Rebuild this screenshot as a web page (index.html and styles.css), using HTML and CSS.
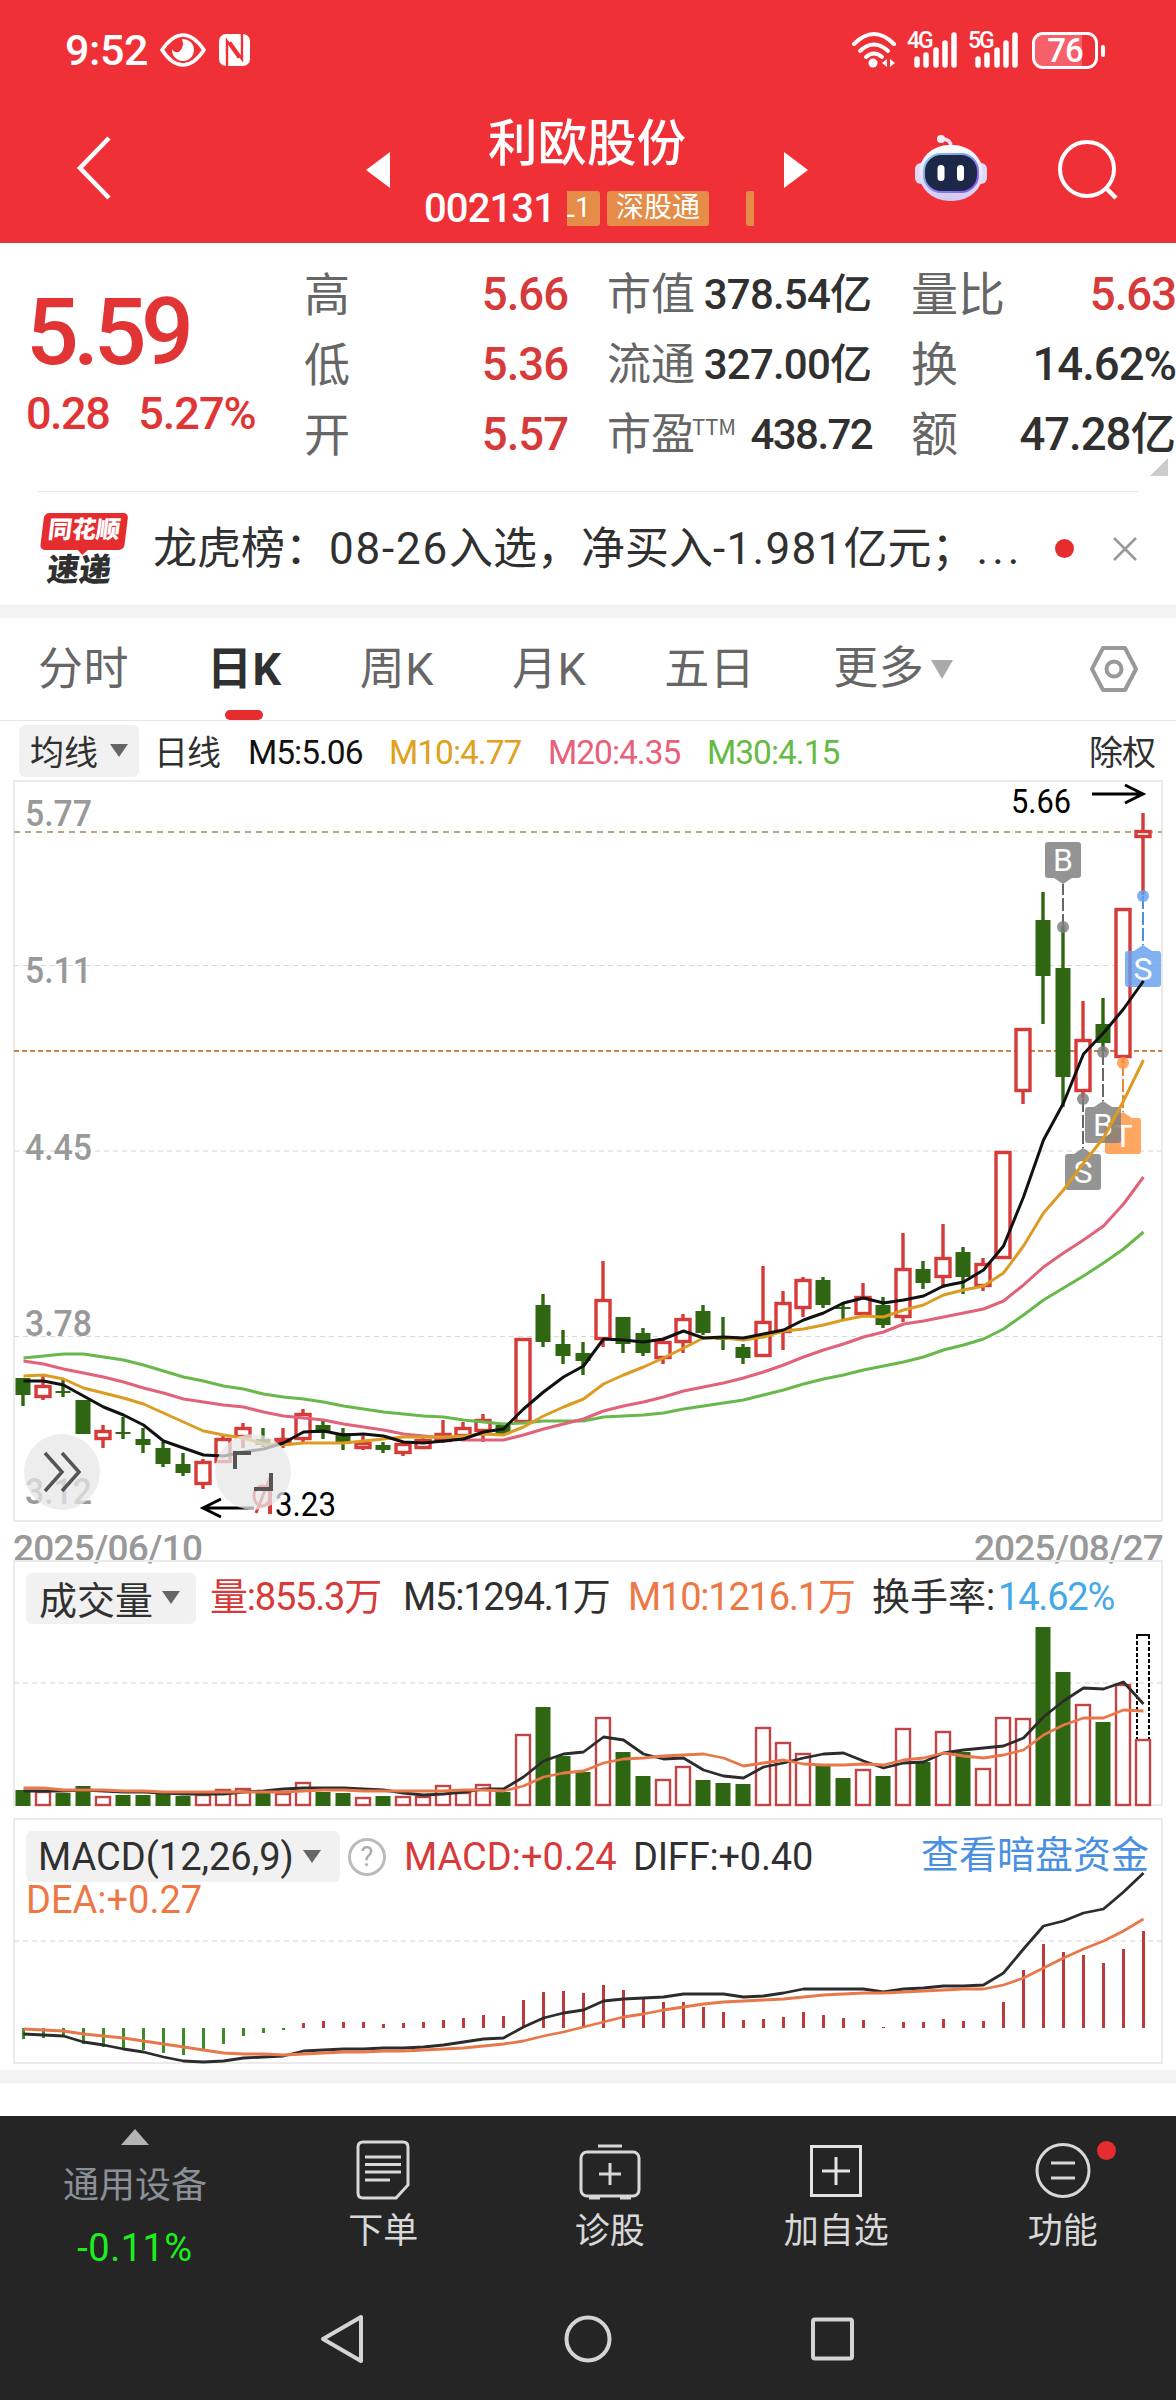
FILE: index.html
```html
<!DOCTYPE html>
<html lang="zh-CN">
<head>
    <meta charset="UTF-8">
    <meta name="viewport" content="width=device-width, initial-scale=1.0">
    <title>利欧股份 002131</title>
    <link rel="stylesheet" href="styles.css">
</head>
<body>
    <!-- Red top area -->
    <header class="top">
        <div class="status-bar">
            <div class="status-left">
                <span class="clock">9:52</span>
                <svg class="eye-icon" width="46" height="36" viewBox="0 0 46 36">
                    <path d="M2 18 Q12 3 23 3 Q34 3 44 18 Q34 33 23 33 Q12 33 2 18 Z" fill="none" stroke="#fff" stroke-width="3.6"/>
                    <path d="M22 7 A11 11 0 1 1 12 17 A6 6 0 0 0 19 20 Q25 15 22 7 Z" fill="#fff"/>
                </svg>
                <svg class="nfc-icon" width="32" height="34" viewBox="0 0 32 34">
                    <rect x="0" y="1" width="31" height="32" rx="7" fill="#fff"/>
                    <path d="M8 33 V8 L20 25 M23 1 V26 L11 9" fill="none" stroke="#f03037" stroke-width="2.4"/>
                </svg>
            </div>
            <div class="status-right">
                <svg width="46" height="38" viewBox="0 0 46 38">
                    <g fill="none" stroke="#fff" stroke-width="4" stroke-linecap="round">
                        <path d="M3 13 Q23 -7 43 13"/>
                        <path d="M9 20 Q23 7 37 20"/>
                        <path d="M15 26 Q23 19 31 26"/>
                    </g>
                    <circle cx="22" cy="32" r="4.5" fill="#fff"/>
                    <path d="M36 28 V36 L31 32 Z M39 28 V36 L44 32 Z" fill="#fff"/>
                </svg>
                <div class="signal">
                    <span>4G</span>
                    <svg width="50" height="36" viewBox="0 0 50 36"><path d="M9 27 V33 M18 23 V33 M28 18 V33 M37 11 V33 M46 3 V33" stroke="#fff" stroke-width="5.5" stroke-linecap="round"/></svg>
                </div>
                <div class="signal">
                    <span>5G</span>
                    <svg width="50" height="36" viewBox="0 0 50 36"><path d="M9 27 V33 M18 23 V33 M28 18 V33 M37 11 V33 M46 3 V33" stroke="#fff" stroke-width="5.5" stroke-linecap="round"/></svg>
                </div>
                <div class="battery"><span>76</span></div>
            </div>
        </div>
        <div class="title-bar">
            <svg class="back" width="40" height="68" viewBox="0 0 40 68"><path d="M35 4 L6 34 L35 64" fill="none" stroke="#fff" stroke-width="4.5"/></svg>
            <svg class="prev" width="26" height="38" viewBox="0 0 26 38"><path d="M25 1 V37 L1 19 Z" fill="#fff"/></svg>
            <div class="stock">
                <h1>利欧股份</h1>
                <div class="stock-code">
                    <span class="code">002131</span>
                    <div class="tags"><span class="tag cut">L1</span><span class="tag">深股通</span><span class="tag next"></span></div>
                </div>
            </div>
            <svg class="next-stock" width="26" height="38" viewBox="0 0 26 38"><path d="M1 1 V37 L25 19 Z" fill="#fff"/></svg>
            <svg class="robot" width="74" height="70" viewBox="0 0 74 70">
                <defs>
                    <linearGradient id="shell" x1="0" y1="0" x2="0" y2="1">
                        <stop offset="0" stop-color="#fff"/>
                        <stop offset="1" stop-color="#cfc9f2"/>
                    </linearGradient>
                    <linearGradient id="rim" x1="0" y1="0" x2="1" y2="1">
                        <stop offset="0" stop-color="#7fd0f0"/>
                        <stop offset="1" stop-color="#8a4fe8"/>
                    </linearGradient>
                </defs>
                <path d="M37 14 Q37 6 28 6" fill="none" stroke="#e8e2f8" stroke-width="3.5"/>
                <circle cx="27" cy="6" r="4" fill="#f4eefc"/>
                <rect x="1" y="30" width="12" height="21" rx="6" fill="#ddd9f8"/>
                <rect x="61" y="30" width="12" height="21" rx="6" fill="#ddd9f8"/>
                <rect x="5" y="12" width="64" height="56" rx="30" fill="url(#shell)"/>
                <rect x="10" y="21" width="54" height="38" rx="17" fill="#1d2748" stroke="url(#rim)" stroke-width="2"/>
                <rect x="23.500" y="32" width="7" height="16" rx="3.500" fill="#fff"/>
                <rect x="43" y="32" width="7" height="16" rx="3.500" fill="#fff"/>
            </svg>
            <svg class="search" width="62" height="62" viewBox="0 0 62 62">
                <circle cx="30" cy="30" r="27" fill="none" stroke="#fff" stroke-width="4"/>
                <path d="M48 48 L59 59" stroke="#fff" stroke-width="4.500"/>
            </svg>
        </div>
    </header>

    <!-- Quote summary -->
    <section class="quote">
        <div class="price-box">
            <div class="price">5.59</div>
            <div class="change"><span>0.28</span><span class="pct">5.27%</span></div>
        </div>
        <div class="col col-a">
            <div><label>高</label><b class="up">5.66</b></div>
            <div><label>低</label><b class="up">5.36</b></div>
            <div><label>开</label><b class="up">5.57</b></div>
        </div>
        <div class="col col-b">
            <div><label>市值</label><b>378.54<i>亿</i></b></div>
            <div><label>流通</label><b>327.00<i>亿</i></b></div>
            <div><label>市盈<sup>TTM</sup></label><b class="pe">438.72</b></div>
        </div>
        <div class="col col-c">
            <div><label>量比</label><b class="up">5.63</b></div>
            <div><label>换</label><b>14.62%</b></div>
            <div><label>额</label><b>47.28<i>亿</i></b></div>
        </div>
        <span class="corner"></span>
    </section>

    <!-- News line -->
    <section class="news">
        <div class="news-logo">
            <span class="bubble">同花顺</span>
            <span class="sub">速递</span>
        </div>
        <p><span>龙虎榜：</span><span class="n1">08-26</span><span>入选，净买入</span><span class="n2">-1.981</span><span>亿元；</span><span class="dots">...</span></p>
        <span class="red-dot"></span>
        <svg class="close" width="26" height="26" viewBox="0 0 26 26"><path d="M2 2 L24 24 M24 2 L2 24" stroke="#999" stroke-width="2.6"/></svg>
    </section>

    <!-- Period tabs -->
    <nav class="tabs">
        <a>分时</a>
        <a class="active">日K</a>
        <a>周K</a>
        <a>月K</a>
        <a>五日</a>
        <a class="more">更多<svg width="22" height="19" viewBox="0 0 22 19"><path d="M0 0 H22 L11 19 Z" fill="#aaa"/></svg></a>
        <svg class="setting" width="50" height="48" viewBox="0 0 50 48">
            <path d="M14 3 H36 L47 24 L36 45 H14 L3 24 Z" fill="none" stroke="#999" stroke-width="4" stroke-linejoin="round"/>
            <circle cx="25" cy="24" r="7.500" fill="none" stroke="#999" stroke-width="4"/>
        </svg>
    </nav>

    <!-- Moving average legend -->
    <div class="ma-legend">
        <button class="pick">均线<i class="caret"></i></button>
        <span class="day">日线</span>
        <span class="m5">M5:5.06</span>
        <span class="m10">M10:4.77</span>
        <span class="m20">M20:4.35</span>
        <span class="m30">M30:4.15</span>
        <span class="fix">除权</span>
    </div>

    <!-- Charts -->
    <div class="panel kline">
        <svg id="kline" width="1176" height="742"></svg>
        <button class="round expand"><svg width="40" height="42" viewBox="0 0 40 42"><path d="M3 2 L20 21 L3 40 M20 2 L37 21 L20 40" fill="none" stroke="#555" stroke-width="3.5"/></svg></button>
        <button class="round full"><svg width="40" height="42" viewBox="0 0 40 42"><path d="M2 18 V2 H18 M38 22 V38 H21" fill="none" stroke="#555" stroke-width="4"/></svg></button>
    </div>
    <div class="dates"><span>2025/06/10</span><span>2025/08/27</span></div>

    <div class="panel volume">
        <svg id="volume" width="1176" height="248"></svg>
        <div class="legend">
            <button class="pick">成交量<i class="caret"></i></button>
            <span class="red">量:855.3万</span>
            <span class="vm5">M5:1294.1万</span>
            <span class="orange">M10:1216.1万</span>
            <span class="turn">换手率:</span>
            <span class="blue">14.62%</span>
        </div>
    </div>

    <div class="panel macd">
        <svg id="macd" width="1176" height="248"></svg>
        <div class="legend">
            <button class="pick">MACD(12,26,9)<i class="caret"></i></button>
            <span class="help">?</span>
            <span class="red">MACD:+0.24</span>
            <span class="diff">DIFF:+0.40</span>
            <a class="dark-pool">查看暗盘资金</a>
        </div>
        <span class="dea">DEA:+0.27</span>
    </div>
    <div class="band"></div>

    <!-- Bottom bar -->
    <footer>
        <div class="actions">
            <div class="device">
                <i class="up-tri"></i>
                <span>通用设备</span>
                <em>-0.11%</em>
            </div>
            <div class="action">
                <svg width="56" height="62" viewBox="0 0 56 62" fill="none" stroke="#d8d8d8" stroke-width="3">
                    <path d="M8 3 H48 Q53 3 53 8 V46 L41 59 H8 Q3 59 3 54 V8 Q3 3 8 3 Z"/>
                    <path d="M10 18 H46 M10 25.500 H46 M10 33 H46 M10 41 H35"/>
                </svg>
                <span>下单</span>
            </div>
            <div class="action">
                <svg width="64" height="62" viewBox="0 0 64 62" fill="none" stroke="#d8d8d8" stroke-width="3">
                    <rect x="3" y="13" width="58" height="44" rx="6"/>
                    <path d="M20 7 H44 M32 24 V46 M21 35 H43"/>
                    <path d="M11 58.500 H22 M42 58.500 H53" stroke-width="4"/>
                </svg>
                <span>诊股</span>
            </div>
            <div class="action">
                <svg width="56" height="62" viewBox="0 0 56 62" fill="none" stroke="#e4e4e4" stroke-width="3">
                    <rect x="3.500" y="7.500" width="49" height="49"/>
                    <path d="M28 18 V46 M14 32 H42"/>
                </svg>
                <span>加自选</span>
            </div>
            <div class="action">
                <svg width="58" height="62" viewBox="0 0 58 62" fill="none" stroke="#d8d8d8" stroke-width="3">
                    <circle cx="29" cy="31.500" r="26"/>
                    <path d="M17 24 H41 M17 39 H41"/>
                </svg>
                <span>功能</span>
                <i class="badge"></i>
            </div>
        </div>
        <div class="sys-nav">
            <svg width="48" height="52" viewBox="0 0 48 52"><path d="M43 4 V48 L5 26 Z" fill="none" stroke="#d4d4d4" stroke-width="4" stroke-linejoin="round"/></svg>
            <svg width="48" height="52" viewBox="0 0 48 52"><circle cx="25" cy="26" r="21.500" fill="none" stroke="#d4d4d4" stroke-width="4"/></svg>
            <svg width="48" height="52" viewBox="0 0 48 52"><rect x="5" y="6.500" width="39" height="39" rx="2" fill="none" stroke="#d4d4d4" stroke-width="4"/></svg>
        </div>
    </footer>
    <script src="chart.js"></script>
</body>
</html>
```
FILE: styles.css
```css
* {
    box-sizing: border-box;
}

body {
    margin: 0;
    width: 1176px;
    height: 2400px;
    overflow: hidden;
    background-color: #fff;
    color: #303030;
    font-family: Roboto, "Noto Sans CJK SC", sans-serif;
}

svg {
    display: block;
    flex: none;
    overflow: visible;
}

button {
    border: none;
    font-family: inherit;
    color: inherit;
}

span, a, label, b, h1 {
    white-space: nowrap;
}

i {
    font-style: normal;
}

/* Top area */
.top {
    height: 243px;
    background-color: #f03037;
    border-bottom: 1px solid #c9404a;
    color: #fff;
}

.status-bar {
    height: 100px;
    padding: 0 70px 0 65px;
    display: flex;
    justify-content: space-between;
    align-items: center;
}

.status-left, .status-right {
    display: flex;
    align-items: center;
}

.clock {
    width: 95px;
    font-size: 43px;
    font-weight: 500;
    letter-spacing: -0.4px;
}

.nfc-icon {
    margin-left: 13px;
}

.signal {
    position: relative;
    margin-left: 11px;
}

.signal span {
    position: absolute;
    left: -1px;
    top: -3px;
    font-size: 23px;
    line-height: 24px;
    font-weight: 500;
    letter-spacing: -2px;
}

.battery {
    position: relative;
    width: 66px;
    height: 37px;
    margin-left: 13px;
    margin-right: 8px;
    border: 3px solid #fff;
    border-radius: 11px;
    background: linear-gradient(to right, #f6606a 79%, transparent 79%);
    font-size: 33px;
    font-weight: 500;
    line-height: 32px;
    text-align: center;
    letter-spacing: -1px;
}

.battery::after {
    content: "";
    position: absolute;
    right: -10px;
    top: 10px;
    width: 4px;
    height: 12px;
    border-radius: 2px;
    background-color: #fff;
}

.title-bar {
    height: 142px;
    padding-left: 74px;
    display: flex;
}

.back {
    margin-top: 34px;
}

.prev {
    margin: 51px 0 0 251px;
}

.stock {
    width: 362px;
    margin-left: 33px;
    padding-top: 12px;
}

h1 {
    margin: 0 0 0 64px;
    font-size: 49.5px;
    line-height: 64px;
    font-weight: 500;
}

.stock-code {
    display: flex;
    align-items: center;
    height: 56px;
    margin-top: 4px;
}

.code {
    width: 143px;
    font-size: 40px;
    font-weight: 500;
    letter-spacing: -0.9px;
}

.tags {
    width: 187px;
    height: 35px;
    display: flex;
    overflow: hidden;
}

.tag {
    flex: none;
    width: 102px;
    height: 35px;
    border-radius: 3px;
    background-color: #e58c48;
    font-size: 28px;
    line-height: 34px;
    text-align: center;
}

.tag.cut {
    width: 33px;
    margin-right: 7px;
    border-radius: 0 3px 3px 0;
    text-align: left;
    text-indent: -7px;
    font-size: 28px;
}

.tag.next {
    margin-left: 37px;
}

.next-stock {
    margin: 51px 0 0 -3px;
}

.robot {
    margin: 33px 0 0 105px;
}

.search {
    margin: 39px 0 0 69px;
}

/* Quote */
.quote {
    position: relative;
    height: 249px;
    display: flex;
}

.quote::after {
    content: "";
    position: absolute;
    left: 38px;
    right: 38px;
    bottom: 0;
    height: 1px;
    background-color: #e8e8e8;
}

.price-box {
    width: 304px;
    padding: 35px 0 0 26px;
    color: #e03435;
}

.price {
    font-size: 93px;
    line-height: 110px;
    font-weight: 500;
    letter-spacing: -5.5px;
}

.change {
    display: flex;
    gap: 29px;
    font-size: 45px;
    line-height: 52px;
    font-weight: 500;
    letter-spacing: -1.5px;
}

.change .pct {
    letter-spacing: -1px;
}

.col {
    padding-top: 17px;
}

.col > div {
    display: flex;
    justify-content: space-between;
    height: 70px;
    line-height: 70px;
}

.col label {
    margin-top: -4px;
    font-family: "Noto Sans CJK SC", sans-serif;
    font-size: 46px;
    color: #666;
}

.col b {
    font-size: 45.5px;
    font-weight: 500;
    letter-spacing: -1px;
}

.col b i {
    letter-spacing: 0;
}

.col .up {
    color: #d63a39;
}

.col-a {
    width: 264px;
}

.col-b {
    width: 265px;
    margin-left: 39px;
}

.col-b label {
    font-size: 44px;
}

.col-b b {
    font-size: 42px;
    letter-spacing: -0.8px;
}

.col-b .pe {
    letter-spacing: -1.6px;
}

.col-b sup {
    font-size: 22px;
    line-height: 0;
    vertical-align: 15px;
    font-weight: 400;
    margin-left: -3px;
}

.col-c {
    width: 265px;
    margin-left: 39px;
}

.col-c label {
    font-size: 47px;
}

.corner {
    position: absolute;
    right: 8px;
    bottom: 16px;
    border-left: 18px solid transparent;
    border-bottom: 18px solid #ccc;
}

/* News */
.news {
    height: 126px;
    border-bottom: 13px solid #f3f3f3;
    padding-left: 37px;
    display: flex;
    align-items: center;
}

.news-logo {
    width: 90px;
    height: 72px;
    display: flex;
    flex-direction: column;
    align-items: center;
    font-weight: 900;
    transform: skewX(-7deg);
}

.bubble {
    position: relative;
    width: 84px;
    height: 37px;
    border-radius: 5px;
    background-color: #e52d30;
    color: #fff;
    font-size: 24px;
    line-height: 35px;
    text-align: center;
}

.bubble::after {
    content: "";
    position: absolute;
    left: 37px;
    top: 36px;
    border: 6px solid transparent;
    border-top-color: #e52d30;
    border-bottom: none;
}

.sub {
    margin-top: 5px;
    font-size: 32px;
    line-height: 30px;
}

.news p {
    margin: 0;
    width: 897px;
    padding-left: 26px;
    display: flex;
    font-size: 44px;
    line-height: 60px;
}

.news .n1 {
    letter-spacing: 1.8px;
}

.news .n2 {
    letter-spacing: 1.3px;
}

.news .dots {
    margin-left: 1px;
    letter-spacing: 4px;
}

.red-dot {
    flex: none;
    width: 19px;
    height: 19px;
    margin-left: 31px;
    border-radius: 50%;
    background-color: #e52d30;
}

.close {
    margin-left: 38px;
}

/* Tabs */
.tabs {
    height: 103px;
    border-bottom: 1px solid #e6e6e6;
    padding-left: 38px;
    display: flex;
    font-size: 45px;
    letter-spacing: 0.5px;
    line-height: 104px;
    color: #666;
}

.tabs a {
    height: 102px;
    margin-right: 78px;
}

.tabs .active {
    position: relative;
    color: #303030;
    font-weight: 700;
}

.tabs .active::after {
    content: "";
    position: absolute;
    left: 18px;
    bottom: 0;
    width: 38px;
    height: 10px;
    border-radius: 5px;
    background-color: #e52d30;
}

.tabs .more {
    display: flex;
    align-items: center;
    gap: 7px;
    margin-right: 0;
}

.setting {
    margin: 27px 37px 0 auto;
}

/* Legends */
.pick {
    display: flex;
    align-items: center;
    border-radius: 6px;
    background-color: #f1f1f1;
    padding: 0;
}

.caret {
    border: 9px solid transparent;
    border-top: 13px solid #666;
    border-bottom: none;
}

.ma-legend {
    height: 59px;
    padding: 0 21px 0 19px;
    display: flex;
    align-items: center;
    font-size: 33.5px;
    letter-spacing: -1px;
}

.ma-legend .pick {
    width: 120px;
    height: 52px;
    padding-left: 11px;
    gap: 12px;
    font-size: 34px;
}

.ma-legend .day {
    width: 94px;
    margin-left: 15px;
    font-size: 34px;
}

.m5, .m10, .m20, .m30 {
    padding-top: 4px;
}

.m5 {
    width: 141px;
    color: #111;
}

.m10 {
    width: 159px;
    color: #e0a020;
}

.m20 {
    width: 159px;
    color: #e8607a;
}

.m30 {
    color: #66bb44;
}

.ma-legend .fix {
    margin-left: auto;
    font-size: 34px;
}

/* Chart panels */
.panel {
    position: relative;
}

.kline {
    height: 742px;
}

.round {
    position: absolute;
    top: 654px;
    width: 76px;
    height: 76px;
    padding: 0;
    border-radius: 50%;
    background-color: rgba(231, 231, 231, 0.75);
    display: flex;
    align-items: center;
    justify-content: center;
}

.expand {
    left: 24px;
}

.full {
    left: 215px;
}

.dates {
    height: 38px;
    padding: 0 13px;
    display: flex;
    justify-content: space-between;
    font-size: 37px;
    font-weight: 500;
    letter-spacing: -0.8px;
    line-height: 54px;
    color: #999;
}

.volume {
    height: 258px;
}

.macd {
    height: 252px;
}

.legend {
    position: absolute;
    left: 26px;
    right: 27px;
    top: 13px;
    height: 51px;
    display: flex;
    align-items: center;
    font-size: 38px;
    line-height: 48px;
    letter-spacing: -1.2px;
}

.legend > span, .legend > a {
    padding-bottom: 3px;
}

.legend .pick {
    width: 170px;
    height: 51px;
    padding: 0 0 3px 13px;
    gap: 9px;
    font-size: 38px;
    margin-right: 14px;
}

.legend .red {
    width: 193px;
    color: #d63a39;
}

.vm5 {
    width: 225px;
}

.orange {
    width: 244px;
    color: #ee7744;
}

.turn {
    width: 126px;
    letter-spacing: 0;
}

.blue {
    color: #45a8e8;
}

.macd .legend {
    letter-spacing: 0;
}

.macd .pick {
    width: 314px;
    margin-right: 8px;
    padding-bottom: 0;
    padding-left: 12px;
}

.legend .help {
    width: 38px;
    height: 38px;
    margin-right: 18px;
    padding: 0;
    border: 3px solid #bbb;
    border-radius: 50%;
    font-size: 27px;
    line-height: 33px;
    text-align: center;
    color: #aaa;
}

.macd .red {
    width: 229px;
}

.macd .red, .macd .diff {
    padding-bottom: 0;
}

.macd .diff {
    letter-spacing: -0.2px;
}

.dark-pool {
    margin-left: auto;
    color: #4a90e2;
}

.dea {
    position: absolute;
    left: 26px;
    top: 60px;
    font-size: 38px;
    color: #ee7744;
}

.band {
    height: 13px;
    margin-bottom: 33px;
    background-color: #f3f3f3;
}

/* Bottom */
footer {
    height: 284px;
    background-color: #252525;
    color: #d8d8d8;
}

.actions {
    height: 160px;
    display: flex;
    font-size: 35px;
}

.device {
    width: 270px;
    padding-top: 13px;
    display: flex;
    flex-direction: column;
    align-items: center;
    color: #8a9096;
}

.up-tri {
    border: 14px solid transparent;
    border-top: none;
    border-bottom: 16px solid #b5b5b5;
}

.device span {
    margin-top: 16px;
    line-height: 50px;
    font-size: 36px;
}

.device em {
    margin-top: 12px;
    font-style: normal;
    line-height: 50px;
    font-size: 38px;
    letter-spacing: 0.5px;
    color: #1bf01b;
}

.action {
    position: relative;
    flex: 1;
    padding-top: 23px;
    display: flex;
    flex-direction: column;
    align-items: center;
}

.action span {
    margin-top: 6px;
    line-height: 50px;
}

.badge {
    position: absolute;
    right: 60px;
    top: 25px;
    width: 19px;
    height: 19px;
    border-radius: 50%;
    background-color: #e52d30;
}

.sys-nav {
    height: 124px;
    padding: 37px 320px 0 318px;
    display: flex;
    justify-content: space-between;
}

/* SVG text */
.axis {
    font-size: 36px;
    font-weight: 500;
    fill: #999;
}

.mark {
    font-size: 33px;
    fill: #000;
}

.tag-letter {
    font-size: 32px;
    fill: #fff;
    text-anchor: middle;
}
```
FILE: chart.js
```js
// [color, body top, body bottom, high, low]
const candles = [
    ['g', 598, 615, 598, 626], ['r', 605, 618, 596, 620], ['g', 611, 613, 600, 617], ['g', 620, 654, 620, 654],
    ['r', 650, 660, 645, 668], ['g', 652, 654, 637, 659], ['g', 659, 665, 648, 673], ['g', 668, 684, 662, 687],
    ['g', 684, 693, 673, 696], ['r', 681, 705, 679, 709], ['r', 658, 683, 655, 683], ['r', 647, 658, 643, 668],
    ['g', 659, 665, 648, 667], ['r', 658, 663, 648, 668], ['r', 633, 660, 629, 662], ['g', 645, 653, 641, 659],
    ['g', 653, 664, 648, 670], ['r', 662, 669, 656, 670], ['g', 665, 670, 662, 673], ['r', 663, 674, 662, 676],
    ['r', 659, 669, 657, 669], ['r', 653, 662, 640, 663], ['r', 647, 657, 642, 658], ['r', 639, 652, 634, 662],
    ['g', 645, 654, 644, 655], ['r', 558, 643, 558, 643], ['g', 525, 562, 514, 567], ['g', 564, 576, 550, 584],
    ['g', 573, 581, 562, 595], ['r', 519, 560, 481, 567], ['g', 537, 564, 537, 573], ['g', 553, 573, 548, 576],
    ['r', 561, 579, 558, 584], ['r', 538, 563, 534, 573], ['g', 531, 553, 525, 555], ['g', 558, 560, 537, 570],
    ['g', 567, 578, 564, 584], ['r', 541, 577, 486, 577], ['r', 522, 553, 511, 570], ['r', 499, 529, 497, 537],
    ['g', 500, 525, 497, 528], ['g', 527, 529, 522, 539], ['r', 516, 535, 503, 535], ['g', 525, 545, 517, 548],
    ['r', 488, 538, 453, 542], ['g', 489, 503, 481, 509], ['r', 477, 498, 444, 508], ['g', 472, 497, 467, 514],
    ['r', 483, 507, 478, 511], ['r', 371, 479, 371, 479], ['r', 248, 312, 248, 324], ['g', 140, 196, 112, 244],
    ['g', 188, 297, 146, 327], ['r', 259, 312, 221, 318], ['g', 244, 263, 218, 271], ['r', 128, 278, 128, 283],
    ['r', 50, 58, 33, 115]
];

const ma5 = [601,601,605,616,627,635,645,661,668,675,676,672,669,663,652,651,655,654,656,662,663,661,659,652,649,629,612,597,586,559,560,562,559,551,558,557,558,554,550,540,533,523,518,523,520,516,506,502,490,466,417,360,323,274,253,229,201];
const ma10 = [596,595,599,608,613,618,624,633,642,651,655,658,664,665,663,663,663,661,659,657,657,657,656,654,655,647,636,627,619,604,595,587,578,568,558,558,560,557,551,549,545,540,536,537,530,525,515,510,506,493,466,433,410,383,358,321,280];
const ma20 = [581,584,589,593,597,602,608,613,619,622,625,627,632,636,638,640,644,647,650,654,656,658,660,660,660,655,649,644,639,631,626,622,617,611,607,603,598,592,585,577,570,564,557,552,544,541,537,533,529,521,505,487,473,460,446,424,397];
const ma30 = [578,576,574,574,577,580,585,591,597,601,606,609,614,617,619,622,626,629,632,634,636,637,640,642,644,643,641,641,641,637,636,635,633,629,626,623,620,615,610,604,599,595,590,586,582,577,570,565,559,549,535,520,508,496,483,469,452];

const volumes = [16,15,13,20,10,11,11,12,10,12,17,18,13,13,24,14,13,9,10,10,10,21,14,22,14,72,99,50,34,89,54,30,27,40,26,23,22,79,64,53,40,28,37,30,78,44,75,54,38,89,88,179,134,102,84,122,67];
const vol5 = [231,231,231,230,231,232,232,233,234,234,234,232,231,229,228,228,228,229,230,233,235,234,232,229,229,217,201,194,192,177,180,194,199,198,210,216,218,207,203,198,194,193,201,208,203,202,193,190,188,186,178,157,141,128,129,122,144];
const vol10 = [228,228,230,230,230,231,231,232,232,232,232,232,232,232,231,230,230,231,231,231,231,231,230,230,231,226,217,213,211,203,199,198,196,195,194,198,206,203,200,204,205,205,204,205,200,198,193,196,198,195,190,175,165,158,158,150,151];

const macdBars = [-11,-10,-9,-16,-19,-22,-22,-25,-27,-23,-16,-8,-5,-2,5,7,6,6,4,5,6,8,10,13,12,28,36,37,35,43,38,29,26,26,21,16,8,9,11,16,13,10,8,1,6,6,9,7,7,26,58,84,76,73,65,79,97];
const diff = [216,217,218,224,227,231,234,239,243,244,243,240,239,238,233,232,231,231,230,230,229,227,224,221,220,209,200,195,192,183,181,180,179,176,176,176,179,178,175,171,171,171,171,174,171,170,168,168,167,155,131,108,103,95,91,74,55];
const dea = [211,212,213,216,218,220,223,226,229,232,235,236,236,237,236,235,234,234,233,233,232,231,230,228,226,223,218,214,209,204,199,196,192,189,186,184,183,182,181,179,177,176,175,175,174,173,172,171,171,167,160,150,140,131,123,113,101];

const GREEN = '#2f6612';
const RED = '#d63a39';

function xOf(i) {
    return 23 + i * 20;
}

function line(x1, y1, x2, y2, color, width, dash) {
    return `<line x1="${x1}" y1="${y1}" x2="${x2}" y2="${y2}" stroke="${color}" stroke-width="${width}"${dash ? ` stroke-dasharray="${dash}"` : ''}/>`;
}

function curve(values, color, width = 3) {
    const points = values.map((y, i) => `${xOf(i) + 0.5},${y}`).join(' ');
    return `<polyline points="${points}" fill="none" stroke="${color}" stroke-width="${width}" stroke-linejoin="round"/>`;
}

function frame(top, bottom) {
    return `<rect x="14" y="${top}" width="1148" height="${bottom - top}" fill="none" stroke="#ebebeb" stroke-width="2"/>`;
}

function text(x, y, value, width, cls) {
    return `<text x="${x}" y="${y}" class="${cls}" textLength="${width}" lengthAdjust="spacingAndGlyphs">${value}</text>`;
}

// Trade marker: dot on the candle, dashed stem and a letter tag
function marker(x, dotY, boxY, letter, color, stem) {
    const above = boxY < dotY;
    const edge = above ? boxY + 36 : boxY;
    const tip = above ? edge + 6 : edge - 6;
    return line(x, dotY, x, tip, stem, 2, '13 3') +
        `<circle cx="${x}" cy="${dotY}" r="6" fill="${color}"/>` +
        `<rect x="${x - 18}" y="${boxY}" width="36" height="36" rx="3" fill="${color}"/>` +
        `<path d="M${x - 9} ${edge} L${x} ${tip} L${x + 9} ${edge} Z" fill="${color}"/>` +
        `<text x="${x}" y="${boxY + 29}" class="tag-letter">${letter}</text>`;
}

function drawKline() {
    let out = frame(1, 741);
    out += line(14, 185.5, 1162, 185.5, '#d8d8d8', 1, '5 4');
    out += line(14, 371, 1162, 371, '#e8e8e8', 2, '5 4');
    out += line(14, 556.5, 1162, 556.5, '#d8d8d8', 1, '5 4');
    out += line(14, 52, 1162, 52, '#b5a67c', 2, '6 5');
    out += line(14, 271, 1162, 271, '#cf8344', 2, '5 3');
    [['5.77', 46], ['5.11', 203], ['4.45', 380], ['3.78', 556], ['3.12', 724]].forEach(a => {
        out += text(25, a[1], a[0], 67, 'axis');
    });

    candles.forEach((c, i) => {
        const x = xOf(i);
        const color = c[0] === 'g' ? GREEN : RED;
        if (c[0] === 'g') {
            out += line(x, c[3], x, c[4], color, 3.4);
            out += `<rect x="${x - 7.5}" y="${c[1]}" width="15" height="${c[2] - c[1]}" fill="${color}"/>`;
        } else {
            out += line(x, c[3], x, c[1], color, 3.4) + line(x, c[2], x, c[4], color, 3.4);
            out += `<rect x="${x - 7}" y="${c[1] + 1.5}" width="14" height="${c[2] - c[1] - 3}" fill="#fff" stroke="${color}" stroke-width="3.4"/>`;
        }
    });

    out += marker(1063, 147, 62, 'B', 'rgba(125,125,125,.82)', '#666');
    out += marker(1123, 283, 338, 'T', 'rgba(255,150,70,.85)', '#e8853c');
    out += marker(1083, 319, 374, 'S', 'rgba(125,125,125,.82)', '#666');
    out += marker(1103, 272, 327, 'B', 'rgba(125,125,125,.82)', '#666');
    out += marker(1143, 116, 171, 'S', 'rgba(100,160,238,.82)', '#4a90e2');

    out += curve(ma30, '#6ab84c') + curve(ma20, '#e0637a') + curve(ma10, '#dc9c22') + curve(ma5, '#111');

    // highest and lowest price
    out += text(1011, 33, '5.66', 60, 'mark');
    out += '<path d="M1092 14 H1143 M1125 5 L1143 14 L1125 23" fill="none" stroke="#000" stroke-width="3"/>';
    out += '<path d="M254 728 H203 M221 719 L203 728 L221 737" fill="none" stroke="#000" stroke-width="3"/>';
    out += text(275, 736, '3.23', 61, 'mark');
    out += '<g fill="none" stroke="#d63a39" stroke-width="3"><ellipse cx="262" cy="716" rx="8" ry="10"/><path d="M271 695 L256 733"/><path d="M270 700 V734" stroke-width="4"/></g>';
    document.getElementById('kline').innerHTML = out;
}

function drawVolume() {
    let out = frame(1, 245);
    out += line(14, 123, 1162, 123, '#e8e8e8', 2, '5 4');
    volumes.forEach((h, i) => {
        const x = xOf(i);
        if (candles[i][0] === 'g') {
            out += `<rect x="${x - 7.5}" y="${246 - h}" width="15" height="${h}" fill="${GREEN}"/>`;
        } else {
            out += `<rect x="${x - 7}" y="${247 - h}" width="14" height="${h - 2}" fill="#fff" stroke="#c24444" stroke-width="2.4"/>`;
        }
    });
    // estimated volume for the whole day
    out += line(1137, 75, 1137, 179, '#000', 2, '4 2') + line(1149, 75, 1149, 179, '#000', 2, '4 2');
    out += line(1136, 75, 1150, 75, '#000', 2);
    out += curve(vol5, '#2c2c2c', 2.8) + curve(vol10, '#e8784a', 2.8);
    document.getElementById('volume').innerHTML = out;
}

function drawMacd() {
    let out = frame(1, 245);
    out += line(14, 123, 1162, 123, '#e8e8e8', 2, '5 4');
    macdBars.forEach((h, i) => {
        out += line(xOf(i) + 0.5, 210, xOf(i) + 0.5, 210 - h, h < 0 ? '#3a8c24' : '#bb3b3b', 3);
    });
    out += curve(diff, '#2c2c2c', 2.8) + curve(dea, '#e8784a', 2.8);
    document.getElementById('macd').innerHTML = out;
}

drawKline();
drawVolume();
drawMacd();
```
